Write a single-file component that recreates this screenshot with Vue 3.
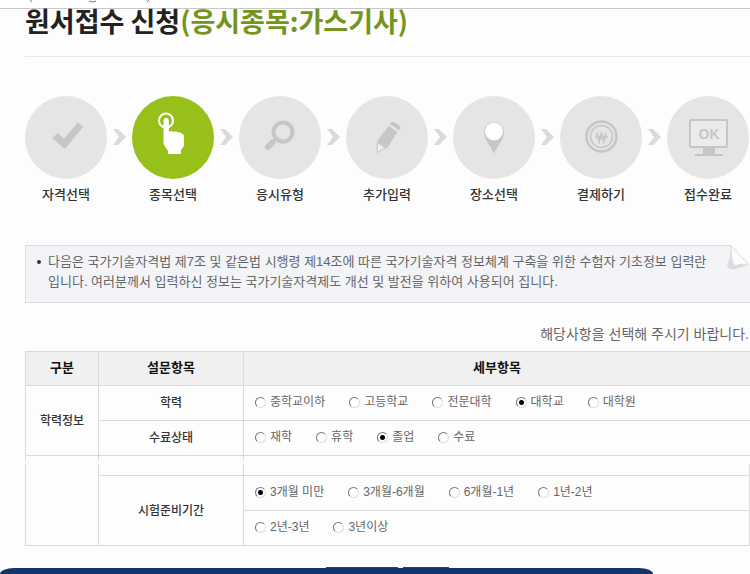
<script setup>
import { ref } from 'vue'

const steps = [
  { icon: 'check', label: '자격선택' },
  { icon: 'touch', label: '종목선택', active: true },
  { icon: 'search', label: '응시유형' },
  { icon: 'pencil', label: '추가입력' },
  { icon: 'pin', label: '장소선택' },
  { icon: 'won', label: '결제하기' },
  { icon: 'monitor', label: '접수완료' }
]

const education = ['중학교이하', '고등학교', '전문대학', '대학교', '대학원']
const status = ['재학', '휴학', '졸업', '수료']
const periodRows = [
  ['3개월 미만', '3개월-6개월', '6개월-1년', '1년-2년'],
  ['2년-3년', '3년이상']
]

const pickedEducation = ref('대학교')
const pickedStatus = ref('졸업')
const pickedPeriod = ref('3개월 미만')
</script>

<template>
  <div class="page">
    <div class="topbar">
      <svg class="marks" width="150" height="3" viewBox="0 0 150 3" aria-hidden="true">
        <path d="M10 0l2 2M69 1q4 2 7 0M127 2l2-2" />
      </svg>
    </div>

    <main class="content">
      <h1>원서접수 신청<span>(응시종목:가스기사)</span></h1>

      <ol class="steps">
        <li v-for="(s, i) in steps" :key="s.icon" class="step" :class="{ active: s.active }">
          <div class="disc">
            <svg viewBox="0 0 82 82" aria-hidden="true">
              <path v-if="s.icon === 'check'" d="M27 42l6-5 6 6 14-17 5 5-18 22z" fill="#c6c6c6" />
              <g v-else-if="s.icon === 'touch'">
                <circle cx="34" cy="24.500" r="7" fill="none" stroke="#fff" stroke-width="2" />
                <path d="M31.500 25q0-3 2.700-3t2.700 3v11q2-2 4.500 0 2.500-1.500 4.500.5 2.500-1 4.500 1.500l1.500 1v11l-3 4v4H36v-3l-4.500-7z" fill="#fff" />
              </g>
              <g v-else-if="s.icon === 'search'">
                <circle cx="44" cy="36" r="9.500" fill="none" stroke="#c6c6c6" stroke-width="4" />
                <path d="M36 44l-3 3" stroke="#c6c6c6" stroke-width="3" />
                <path d="M33.500 46.500l-4.500 4.500" stroke="#c6c6c6" stroke-width="6" stroke-linecap="round" />
              </g>
              <g v-else-if="s.icon === 'pencil'">
                <path d="M31 45.500L42.500 30l9 6L41 52.500z" fill="#c6c6c6" />
                <path d="M31.500 46.500l8 5.500-8.500 4.500z" fill="#eee" stroke="#c6c6c6" />
                <path d="M43.500 28.500l2-2.500q5-.5 9 5.500l-2 3q-3-4-9-6z" fill="#c6c6c6" />
              </g>
              <g v-else-if="s.icon === 'pin'">
                <path d="M41 58c-1.500-6-10-14-10-22a10 10 0 0 1 20 0c0 8-8.500 16-10 22z" fill="#c6c6c6" />
                <circle cx="41" cy="35.500" r="9" fill="#fff" />
              </g>
              <g v-else-if="s.icon === 'won'" fill="none" stroke="#c6c6c6">
                <circle cx="41.500" cy="40.500" r="15" stroke-width="2.500" />
                <circle cx="41.500" cy="40.500" r="11" stroke-width="1.500" />
                <path d="M37 37l2.300 8 2.200-7 2.200 7 2.300-8" stroke-width="2" />
                <path d="M35 41h13" stroke-width="1.500" />
              </g>
              <g v-else>
                <rect x="23" y="24" width="37" height="27" rx="1" fill="#ebebeb" stroke="#c6c6c6" stroke-width="2" />
                <path d="M36 52h12v6H36z" fill="#c6c6c6" />
                <path d="M28 59h28" stroke="#c6c6c6" stroke-width="2" />
                <text x="42" y="43" text-anchor="middle" class="ok">OK</text>
              </g>
            </svg>
          </div>
          <span class="step-label">{{ s.label }}</span>
          <svg v-if="i < steps.length - 1" class="arrow" viewBox="0 0 14 16" width="14" height="16" aria-hidden="true">
            <path d="M1 0h5l8 8-8 8H1l6-8z" fill="#dadada" />
          </svg>
        </li>
      </ol>

      <section class="notice">
        <p>다음은 국가기술자격법 제7조 및 같은법 시행령 제14조에 따른 국가기술자격 정보체계 구축을 위한 수험자 기초정보 입력란<br />입니다. 여러분께서 입력하신 정보는 국가기술자격제도 개선 및 발전을 위하여 사용되어 집니다.</p>
        <svg class="fold" width="24" height="26" viewBox="0 0 24 26" aria-hidden="true">
          <path d="M5 0h19v20z" fill="#fdfdfd" />
          <path d="M5 1C4 10 3 17 1 21q2 4 8 3l14-4z" fill="#dcdcde" />
          <path d="M5 1l18 19q-9-2-14 1-4-3-4-20z" fill="#fdfdfd" stroke="#dedee0" />
        </svg>
      </section>

      <p class="hint">해당사항을 선택해 주시기 바랍니다.</p>

      <table>
        <colgroup><col class="c1" /><col class="c2" /><col /></colgroup>
        <thead>
          <tr><th scope="col">구분</th><th scope="col">설문항목</th><th scope="col">세부항목</th></tr>
        </thead>
        <tbody>
          <tr>
            <th rowspan="2" scope="rowgroup">학력정보</th>
            <th scope="row">학력</th>
            <td>
              <div class="options">
                <label v-for="o in education" :key="o"><input v-model="pickedEducation" type="radio" name="education" :value="o" />{{ o }}</label>
              </div>
            </td>
          </tr>
          <tr>
            <th scope="row">수료상태</th>
            <td>
              <div class="options">
                <label v-for="o in status" :key="o"><input v-model="pickedStatus" type="radio" name="status" :value="o" />{{ o }}</label>
              </div>
            </td>
          </tr>
          <tr class="stub"><td></td><td></td><td></td></tr>
        </tbody>
      </table>

      <table class="continued">
        <colgroup><col class="c1" /><col class="c2" /><col /></colgroup>
        <tbody>
          <tr class="lead"><td rowspan="3"></td><td></td><td></td></tr>
          <tr v-for="(row, i) in periodRows" :key="i">
            <th v-if="i === 0" rowspan="2" scope="rowgroup">시험준비기간</th>
            <td>
              <div class="options">
                <label v-for="o in row" :key="o"><input v-model="pickedPeriod" type="radio" name="period" :value="o" />{{ o }}</label>
              </div>
            </td>
          </tr>
        </tbody>
      </table>
    </main>

    <footer>
      <div class="tabs"><i class="tab wide"></i><i class="tab"></i></div>
      <div class="navy"></div>
    </footer>
  </div>
</template>

<style>
body {
  background: #fdfdfd;
  overflow: hidden;
}
</style>

<style scoped>
* {
  box-sizing: border-box;
}
.page {
  font-family: "Liberation Sans", "Noto Sans CJK KR", sans-serif;
  font-size: 12px;
  color: #666;
}
.topbar {
  height: 9px;
  padding-left: 20px;
  border-bottom: 1px solid #c8c8c8;
  background: #fff;
}
.marks {
  display: block;
  fill: none;
  stroke: #777;
}
.content {
  padding-left: 25px;
}
h1 {
  margin: 0;
  height: 48px;
  border-bottom: 1px solid #e9e9e9;
  font-family: "Noto Sans CJK KR", sans-serif;
  font-size: 27px;
  line-height: 24px;
  font-weight: 700;
  color: #222;
  white-space: nowrap;
}
h1 span {
  color: #74951b;
}
.steps {
  display: flex;
  justify-content: space-between;
  margin: 0;
  padding: 39px 1px 0 0;
  list-style: none;
}
.step {
  position: relative;
  width: 82px;
  text-align: center;
}
.disc {
  height: 83px;
  border-radius: 50%;
  background: #e5e5e5;
}
.disc svg {
  display: block;
}
.active .disc {
  background: #97c11a;
}
.arrow {
  position: absolute;
  left: 87px;
  top: 33px;
}
.ok {
  font: 700 14px "Liberation Sans", sans-serif;
  fill: #c6c6c6;
}
.step-label {
  display: block;
  margin-top: 6px;
  font-size: 13px;
  line-height: 20px;
  font-weight: 500;
  color: #333;
}
.notice {
  position: relative;
  margin-top: 40px;
  padding: 6px 0 10px 22px;
  border: 1px solid #dcdee2;
  border-right: 0;
  background: #f3f4f8;
}
.notice p {
  margin: 0;
  font-size: 13px;
  line-height: 20px;
  white-space: nowrap;
}
.notice::before {
  content: "";
  position: absolute;
  left: 11px;
  top: 14px;
  width: 4px;
  height: 4px;
  border-radius: 50%;
  background: #333;
}
.fold {
  position: absolute;
  right: 0;
  top: -1px;
}
.hint {
  margin: 21px 1px 7px 0;
  font-size: 14px;
  line-height: 20px;
  text-align: right;
}
table {
  width: 100%;
  table-layout: fixed;
  border-spacing: 0;
  border-left: 1px solid #dadada;
  border-top: 1px solid #dadada;
}
.c1 {
  width: 73px;
}
.c2 {
  width: 145px;
}
th,
td {
  height: 35px;
  padding: 0;
  border-right: 1px solid #dadada;
  border-bottom: 1px solid #dadada;
}
th {
  font-size: 12px;
  line-height: 18px;
  font-weight: 500;
  color: #333;
}
thead th {
  height: 34px;
  padding-bottom: 2px;
  background: #f0f0f0;
  font-size: 13px;
  font-weight: 700;
  color: #111;
}
table:not(.continued) tr > :last-child {
  border-right: 0;
}
.stub td {
  height: 5px;
  border-bottom: 0;
}
.continued {
  margin-top: 3px;
  border-top: 0;
}
.lead td {
  height: 12px;
}
.options {
  display: flex;
  gap: 24px;
  padding: 0 0 2px 11px;
  white-space: nowrap;
}
label {
  display: flex;
  align-items: center;
  gap: 4px;
  line-height: 18px;
}
input {
  appearance: none;
  width: 11px;
  height: 11px;
  margin: 0;
  border: 1px solid;
  border-color: #777 #ddd #ddd #777;
  border-radius: 50%;
  background: #fff;
}
input:checked {
  background: radial-gradient(circle, #000 2px, #fff 3px);
}
footer {
  margin-top: 21px;
}
.tabs {
  display: flex;
  gap: 5px;
  padding-left: 326px;
}
.tab {
  width: 46px;
  height: 1px;
  background: #33415c;
}
.wide {
  width: 72px;
}
.navy {
  width: 87%;
  height: 6px;
  border-radius: 14px 14px 0 0 / 6px 6px 0 0;
  background: #14356b;
}
</style>
